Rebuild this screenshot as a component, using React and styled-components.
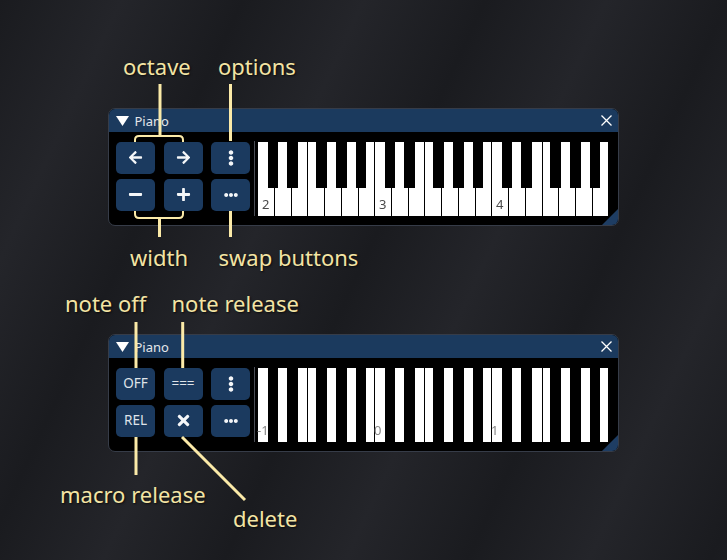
import React from "react";
import styled, { createGlobalStyle } from "styled-components";
import {
  FaArrowLeft,
  FaArrowRight,
  FaMinus,
  FaPlus,
  FaEllipsisV,
  FaEllipsisH,
  FaTimes,
} from "react-icons/fa";

const GlobalStyle = createGlobalStyle`
  html, body {
    margin: 0;
    padding: 0;
    background: #1e1f23;
  }
  body {
    font-family: "Noto Sans", "Liberation Sans", sans-serif;
    -webkit-font-smoothing: antialiased;
  }
`;

const OCTAVE = 117;
const BLACK_KEYS = [
  { left: 10, width: 10 },
  { left: 28.3, width: 11.5 },
  { left: 57.7, width: 11.3 },
  { left: 77.7, width: 11.3 },
  { left: 97.7, width: 10 },
];

export default function App() {
  return (
    <>
      <GlobalStyle />
      <Stage>
        <PianoWindow
          full={false}
          labels={["2", "3", "4"]}
          buttons={[
            <FaArrowLeft key="l" size={15} />,
            <FaArrowRight key="r" size={15} />,
            <FaEllipsisV key="o" size={16} />,
            <FaMinus key="m" size={15} />,
            <FaPlus key="p" size={15} />,
            <FaEllipsisH key="s" size={14} />,
          ]}
        />
        <PianoWindow
          full={true}
          labels={["-1", "0", "1"]}
          buttons={[
            <ButtonText key="off">OFF</ButtonText>,
            <ButtonText key="rel">===</ButtonText>,
            <FaEllipsisV key="o" size={16} />,
            <ButtonText key="mrel">REL</ButtonText>,
            <FaTimes key="d" size={17} />,
            <FaEllipsisH key="s" size={14} />,
          ]}
        />

        <Connectors width="727" height="560" viewBox="0 0 727 560">
          <g stroke="#fbeaa8" fill="none" strokeLinecap="butt">
            {/* top window */}
            <line x1="160" y1="84" x2="160" y2="136" strokeWidth="3" />
            <line x1="230.5" y1="84" x2="230.5" y2="141" strokeWidth="3" />
            <path d="M135 142 V140 Q135 136 139 136 H179 Q183 136 183 140 V142" strokeWidth="2" />
            <path d="M135 211 V214 Q135 218 139 218 H179 Q183 218 183 214 V211" strokeWidth="2" />
            <line x1="159.5" y1="218" x2="159.5" y2="237" strokeWidth="3" />
            <line x1="230.5" y1="211" x2="230.5" y2="237" strokeWidth="3" />
            {/* bottom window */}
            <line x1="136" y1="322" x2="136" y2="368" strokeWidth="3" />
            <line x1="182.7" y1="322" x2="182.7" y2="368" strokeWidth="3" />
            <line x1="136" y1="437" x2="136" y2="475" strokeWidth="3" />
            <line x1="182" y1="437" x2="245" y2="500" strokeWidth="3" />
          </g>
        </Connectors>

        <Callout $x={123} $y={54.8}>octave</Callout>
        <Callout $x={218} $y={54.8}>options</Callout>
        <Callout $x={130} $y={245.5}>width</Callout>
        <Callout $x={218.5} $y={245.5}>swap buttons</Callout>
        <Callout $x={65} $y={292.2}>note off</Callout>
        <Callout $x={171.5} $y={292.2}>note release</Callout>
        <Callout $x={60} $y={483.2}>macro release</Callout>
        <Callout $x={233} $y={506.5}>delete</Callout>
      </Stage>
    </>
  );
}

function PianoWindow({ full, labels, buttons }) {
  const whites = Array.from({ length: 21 }, (_, i) => i);
  return (
    <Window>
      <TitleBar>
        <svg width="13" height="10" viewBox="0 0 13 10">
          <polygon points="0,0 13,0 6.5,10" fill="#ffffff" />
        </svg>
        <Title>Piano</Title>
        <Close width="11" height="11" viewBox="0 0 11 11">
          <path d="M0.5 0.5 L10.5 10.5 M10.5 0.5 L0.5 10.5" stroke="#ffffff" strokeWidth="1.3" />
        </Close>
      </TitleBar>
      <Body>
        <ButtonGrid>
          {buttons.map((b, i) => (
            <ToolButton key={i}>{b}</ToolButton>
          ))}
        </ButtonGrid>
        <Separator />
        <Keyboard>
          {whites.map((i) => (
            <WhiteKey key={i}>
              {i % 7 === 0 && (
                <KeyLabel $full={full}>{labels[i / 7]}</KeyLabel>
              )}
            </WhiteKey>
          ))}
          {[0, 1, 2].map((o) =>
            BLACK_KEYS.map((k, j) => (
              <BlackKey
                key={`${o}-${j}`}
                $full={full}
                style={{ left: o * OCTAVE + k.left, width: k.width }}
              />
            ))
          )}
        </Keyboard>
      </Body>
      <Grip />
    </Window>
  );
}

const Stage = styled.div`
  position: relative;
  width: 727px;
  height: 560px;
  overflow: hidden;
  box-sizing: border-box;
  padding: 108px 0 0 108px;
  display: flex;
  flex-direction: column;
  gap: 108px;
  background: repeating-linear-gradient(
    115deg,
    #1a1b1f 0px,
    #24252a 110px,
    #1a1b1f 220px
  );
`;

const Window = styled.section`
  position: relative;
  width: 511px;
  height: 118px;
  box-sizing: border-box;
  border: 1px solid #363c48;
  border-radius: 7px;
  background: #000000;
  overflow: hidden;
  display: flex;
  flex-direction: column;
  flex-shrink: 0;
`;

const TitleBar = styled.header`
  height: 23px;
  flex-shrink: 0;
  background: #1b3a5e;
  display: flex;
  align-items: center;
  padding: 0 6.5px 0 6.5px;
  gap: 6px;
`;

const Title = styled.span`
  font-family: "Noto Sans", sans-serif;
  font-size: 13px;
  color: #e4e6ea;
  line-height: 1;
  margin-top: 1px;
`;

const Close = styled.svg`
  margin-left: auto;
`;

const Body = styled.div`
  display: flex;
  align-items: flex-start;
  padding: 9.5px 8px 0 7px;
`;

const ButtonGrid = styled.div`
  display: grid;
  grid-template-columns: repeat(3, 39px);
  grid-auto-rows: 32px;
  column-gap: 8.5px;
  row-gap: 5px;
`;

const ToolButton = styled.button`
  border: none;
  border-radius: 5px;
  padding: 0;
  background: #1b3a5f;
  color: #f4f6f8;
  display: flex;
  align-items: center;
  justify-content: center;
`;

const ButtonText = styled.span`
  font-family: "Noto Sans", sans-serif;
  font-size: 13.5px;
  color: #dfe3e9;
  line-height: 1;
`;

const Separator = styled.div`
  width: 1px;
  height: 75px;
  margin: -0.5px 3.3px 0 4px;
  background: #4a4d55;
`;

const Keyboard = styled.div`
  position: relative;
  width: 351px;
  height: 74px;
  display: flex;
  background: #000000;
`;

const WhiteKey = styled.div`
  position: relative;
  flex: 1;
  background: #ffffff;
  border-right: 1px solid #000000;
`;

const BlackKey = styled.div`
  position: absolute;
  top: 0;
  height: ${(p) => (p.$full ? "100%" : "46.5px")};
  background: #000000;
`;

const KeyLabel = styled.span`
  position: absolute;
  left: ${(p) => (p.$full ? "-1.5px" : "4px")};
  bottom: 5px;
  font-family: "Noto Sans", sans-serif;
  font-size: 13px;
  line-height: 13px;
  color: ${(p) => (p.$full ? "#858585" : "#4a4a4a")};
  z-index: 2;
  will-change: transform;
`;

const Grip = styled.div`
  position: absolute;
  right: 0;
  bottom: 0;
  width: 16px;
  height: 16px;
  background: #1e3d63;
  clip-path: polygon(100% 0, 100% 100%, 0 100%);
`;

const Connectors = styled.svg`
  position: absolute;
  left: 0;
  top: 0;
  pointer-events: none;
`;

const Callout = styled.span`
  position: absolute;
  left: ${(p) => p.$x}px;
  top: ${(p) => p.$y}px;
  font-family: "Noto Sans", sans-serif;
  font-size: 22px;
  line-height: 22px;
  color: #f3e4a4;
  white-space: nowrap;
  text-shadow: 1px 1px 2px rgba(0, 0, 0, 0.7);
`;
